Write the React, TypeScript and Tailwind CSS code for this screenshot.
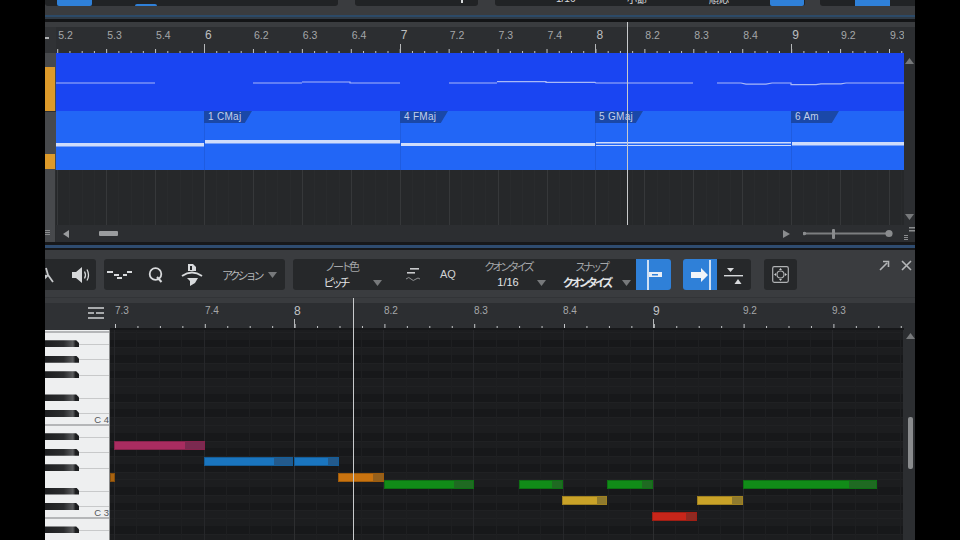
import React from 'react';

const JP = "font-['Noto_Sans_CJK_JP','Noto_Sans',sans-serif]";

const arrangeBeat = 48.93;
const arrangeStart = 204 - 45 - 11 - 3 * arrangeBeat; // x of 5.2 inside the lane

const arrangeLabels = ['5.2', '5.3', '5.4', '6', '6.2', '6.3', '6.4', '7', '7.2', '7.3', '7.4', '8', '8.2', '8.3', '8.4', '9', '9.2', '9.3'];

const pianoBeat = 89.8;
const pianoLabels = [
  { t: '7.3', x: 115 },
  { t: '7.4', x: 205 },
  { t: '8', x: 294 },
  { t: '8.2', x: 384 },
  { t: '8.3', x: 474 },
  { t: '8.4', x: 563 },
  { t: '9', x: 653 },
  { t: '9.2', x: 743 },
  { t: '9.3', x: 832 },
];

const chords = [
  { name: '1 CMaj', x: 204 },
  { name: '4 FMaj', x: 400 },
  { name: '5 GMaj', x: 595 },
  { name: '6 Am', x: 791 },
];

const notes = [
  { x: 114, end: 205, tail: 186, y: 441, c: 'bg-[#a92c60]', d: 'bg-[#7b2a50]' },
  { x: 204, end: 293, tail: 275, y: 457, c: 'bg-[#1a75bf]', d: 'bg-[#235a8c]' },
  { x: 294, end: 339, tail: 329, y: 457, c: 'bg-[#1a75bf]', d: 'bg-[#235a8c]' },
  { x: 110, end: 115, tail: 115, y: 473, c: 'bg-[#a8620f]', d: 'bg-[#a8620f]' },
  { x: 338, end: 384, tail: 374, y: 473, c: 'bg-[#c9730f]', d: 'bg-[#95601c]' },
  { x: 384, end: 474, tail: 455, y: 480, c: 'bg-[#118c18]', d: 'bg-[#1f6a22]' },
  { x: 519, end: 563, tail: 553, y: 480, c: 'bg-[#118c18]', d: 'bg-[#1f6a22]' },
  { x: 607, end: 653, tail: 643, y: 480, c: 'bg-[#118c18]', d: 'bg-[#1f6a22]' },
  { x: 743, end: 877, tail: 850, y: 480, c: 'bg-[#118c18]', d: 'bg-[#1f6a22]' },
  { x: 562, end: 607, tail: 598, y: 496, c: 'bg-[#c9a228]', d: 'bg-[#8f7a2e]' },
  { x: 697, end: 743, tail: 733, y: 496, c: 'bg-[#c9a228]', d: 'bg-[#8f7a2e]' },
  { x: 652, end: 697, tail: 687, y: 512, c: 'bg-[#c8261a]', d: 'bg-[#8f2a22]' },
];

const rowH = 7.76;
const rows = Array.from({ length: 30 }, (_, i) => {
  const n = i - 14;
  const s = ((-n - 1) % 12 + 12) % 12;
  return { n, y: 425 + n * rowH, black: [1, 3, 6, 8, 10].includes(s), c: s === 0 };
});

const Caret = ({ className = '' }: { className?: string }) => (
  <svg width="9" height="6" viewBox="0 0 9 6" className={className}>
    <path d="M0 0h9L4.5 6z" fill="#77797b" />
  </svg>
);

const Ruler = ({ count, step, start, height }: { count: number; step: number; start: number; height: number }) => (
  <svg className="absolute left-0 bottom-0 w-full" height={height}>
    {Array.from({ length: count }, (_, i) => {
      const x = start + i * step;
      const major = i % 4 === 0;
      return <rect key={i} x={x} y={height - (major ? 4 : 2)} width={1} height={major ? 4 : 2} fill="#c4c6c8" />;
    })}
  </svg>
);

function ArrangeView() {
  return (
    <div className="flex flex-col h-[203px] shrink-0">
      <div className="h-[5px] bg-[#3a3c3f]" />
      <div className="flex h-[26px] bg-[#2c2e31]">
        <div className="w-[11px] bg-[#303235] flex items-center pb-1">
          <div className="w-[4px] h-[2px] bg-[#b0b2b4]" />
        </div>
        <div className="relative flex-1 overflow-hidden font-['Liberation_Sans',sans-serif] text-[#a5a7a9]">
          {arrangeLabels.map((t, i) => (
            <span
              key={t}
              className={t.length === 1 ? 'absolute top-0 text-[12px] leading-4 text-[#bcbec0]' : 'absolute top-0 text-[10.5px] leading-4'}
              style={{ left: arrangeStart + i * arrangeBeat + 1 }}
            >
              {t}
            </span>
          ))}
          <Ruler count={72} step={arrangeBeat / 4} start={arrangeStart} height={10} />
          {[0, 1, 2, 3].map(i => (
            <div key={i} className="absolute bottom-0 w-[1px] h-[9px] bg-[#b5b7b9]" style={{ left: 148 + i * 195.7 }} />
          ))}
        </div>
        <div className="w-[11px] bg-[#2c2e31]" />
      </div>
      <div className="flex h-[117px]">
        <div className="w-[11px] flex flex-col bg-[#47494c]">
          <div className="h-[14px]" />
          <div className="h-[44px] bg-[#dd9a2a] mr-[1px]" />
          <div className="h-[43px] border-t border-[#2c2e31]" />
          <div className="h-[15px] bg-[#dd9a2a] mr-[1px]" />
        </div>
        <div className="relative flex-1 flex flex-col">
          <div className="h-[58px] bg-[#1a45f2]">
            <svg width="848" height="58" className="block">
              <g fill="none" stroke="#a9b8f7" strokeWidth="1.2">
                <path d="M0 30H99" />
                <path d="M197 30H246M246 29H294V30H344" />
                <path d="M393 30H441M441 28.6H490V29.4H539L540 30H637" />
                <path d="M661 30H685L690 31.2H710L716 30H735V31.6H760L765 30.8H785L790 30H848" />
              </g>
            </svg>
          </div>
          <div className="h-[59px] bg-[#2266f6] relative">
            <svg width="848" height="59" className="block">
              <g fill="#cfdcfb">
                <rect x="0" y="32" width="148" height="3.5" />
                <rect x="148" y="29" width="196" height="3.5" />
                <rect x="344" y="32" width="195" height="3" />
                <rect x="539" y="31" width="196" height="1.5" />
                <rect x="539" y="34" width="196" height="1" />
                <rect x="735" y="31" width="113" height="3.5" />
              </g>
              {[148, 344, 539, 735].map(x => (
                <rect key={x} x={x} y="0" width="1" height="59" fill="#1f5ce0" />
              ))}
            </svg>
            {chords.map(c => (
              <div
                key={c.name}
                className="absolute top-0 h-[12px] w-[48px] bg-[#1a48a8] text-[#c3d0ea] text-[10px] leading-[12px] pl-[4px] tracking-[0.3px] font-['Liberation_Sans',sans-serif] [clip-path:polygon(0_0,100%_0,85%_100%,0_100%)]"
                style={{ left: c.x - 56 }}
              >
                {c.name}
              </div>
            ))}
          </div>
        </div>
        <div className="w-[11px] bg-[#2c2e31] flex justify-center pt-[5px]">
          <svg width="9" height="6" viewBox="0 0 9 6">
            <path d="M4.5 0L9 6H0z" fill="#77797b" />
          </svg>
        </div>
      </div>
      <div className="flex h-[55px] bg-[#26282a]">
        <div className="w-[11px] bg-[#47494c] border-r border-[#2a2c2e]" />
        <div className="relative flex-1">
          {Array.from({ length: 70 }, (_, i) => (
            <div
              key={i}
              className={i % 4 === 0 ? 'absolute inset-y-0 w-[1px] bg-[#36383a]' : 'absolute inset-y-0 w-[1px] bg-[#292b2d]'}
              style={{ left: ((148 - 3 * arrangeBeat) + i * arrangeBeat / 4) }}
            />
          ))}
        </div>
        <div className="w-[11px] bg-[#2c2e31] flex flex-col items-center justify-end pb-[5px]">
          <svg width="9" height="6" viewBox="0 0 9 6">
            <path d="M0 0h9L4.5 6z" fill="#77797b" />
          </svg>
        </div>
      </div>
    </div>
  );
}

function ArrangeScrollbar() {
  return (
    <div className="flex items-center h-[17px] shrink-0 bg-[#2c2e31]">
      <div className="w-[11px] h-full bg-[#47494c] border-r border-[#2a2c2e] flex flex-col justify-center gap-[1px] pb-[2px]">
        <div className="h-[1px] w-[5px] bg-[#8b8d8f]" />
        <div className="h-[1px] w-[5px] bg-[#8b8d8f]" />
        <div className="h-[1px] w-[5px] bg-[#8b8d8f]" />
      </div>
      <svg width="6" height="8" viewBox="0 0 6 8" className="ml-[7px]">
        <path d="M6 0v8L0 4z" fill="#9a9c9e" />
      </svg>
      <div className="ml-[30px] w-[19px] h-[5px] rounded-[1px] bg-[#9a9c9e]" />
      <div className="flex-1" />
      <svg width="7" height="8" viewBox="0 0 7 8">
        <path d="M0 0v8l7-4z" fill="#8a8c8e" />
      </svg>
      <svg width="92" height="10" viewBox="0 0 92 10" className="ml-[13px]">
        <rect x="0" y="3.5" width="86" height="2" fill="#7c7e80" />
        <circle cx="1.5" cy="4.5" r="1.8" fill="#8a8c8e" />
        <rect x="29" y="0" width="3" height="10" rx="1" fill="#8a8c8e" />
        <circle cx="86" cy="4.5" r="3.6" fill="#8a8c8e" />
      </svg>
      <svg width="20" height="17" viewBox="0 0 20 17">
        <g fill="#8b8d8f">
          <rect x="9" y="10" width="4" height="1" />
          <rect x="9" y="12" width="4" height="1" />
          <rect x="9" y="14" width="4" height="1" />
          <rect x="14" y="2" width="6" height="1.5" />
          <rect x="14" y="5" width="6" height="1.5" />
        </g>
      </svg>
    </div>
  );
}

function Toolbar() {
  return (
    <div className="flex items-start h-[48px] shrink-0 bg-[#3a3c3f] pt-[9px] relative border-b border-[#323437]">
      <div className="flex items-center w-[51px] h-[31px] bg-[#26282a] rounded-r-[3px] overflow-hidden">
        <svg width="14" height="20" viewBox="0 0 14 20" className="-ml-[5px]">
          <path d="M6 3l2 7-3 3M8 10l5 7M6 10l-3 7" stroke="#c6c8ca" strokeWidth="1.8" fill="none" />
        </svg>
        <svg width="20" height="18" viewBox="0 0 20 18" className="ml-[17px]">
          <path d="M1 6h4l6-5v16l-6-5H1z" fill="#d5d7d9" />
          <path d="M13.5 5.5q2 3.5 0 7M16 3.5q3 5.5 0 11" stroke="#d5d7d9" strokeWidth="1.3" fill="none" />
        </svg>
      </div>
      <div className="flex items-center ml-[8px] w-[181px] h-[31px] bg-[#26282a] rounded-[3px]">
        <svg width="26" height="10" viewBox="0 0 26 10" className="ml-[3px]">
          <g fill="#d8dadc">
            <rect x="0" y="1" width="6" height="2" />
            <rect x="7" y="4" width="5" height="2" />
            <rect x="10" y="7" width="5" height="2" />
            <rect x="16" y="4" width="4" height="2" />
            <rect x="20" y="1" width="5" height="2" />
          </g>
        </svg>
        <svg width="16" height="17" viewBox="0 0 16 17" className="ml-[15px]">
          <circle cx="7.5" cy="8" r="5.8" stroke="#d8dadc" strokeWidth="1.8" fill="none" />
          <path d="M9 11l4.5 5" stroke="#d8dadc" strokeWidth="2" />
        </svg>
        <svg width="24" height="24" viewBox="0 0 24 24" className="ml-[16px]">
          <path d="M8 1h5l3 3v4H8z" fill="#d8dadc" />
          <rect x="10" y="3" width="2" height="4" fill="#26282a" />
          <path d="M2 13q10-7 20 0" stroke="#d8dadc" strokeWidth="1.8" fill="none" />
          <path d="M7 15h11l-3 5-5 3v-5z" fill="#d8dadc" />
        </svg>
        <span className={`ml-[18px] text-[11px] tracking-[-3px] whitespace-nowrap leading-4 text-[#b4b6b8] ${JP}`}>アクション</span>
        <Caret className="ml-[7px]" />
      </div>
      <div className="flex items-stretch ml-[8px] w-[343px] h-[31px] bg-[#26282a] rounded-l-[3px] relative">
        <div className={`ml-[16px] w-[64px] flex flex-col items-center whitespace-nowrap tracking-[-3px] text-[11px] ${JP}`}>
          <span className="leading-[15px] text-[#a5a7a9]">ノート色</span>
          <span className="leading-[16px] text-[#e2e4e6] -ml-[11px]">ピッチ</span>
        </div>
        <Caret className="absolute left-[80px] top-[21px]" />
        <svg width="16" height="18" viewBox="0 0 16 18" className="ml-[32px] self-center">
          <rect x="5" y="2" width="9" height="1.6" fill="#c8cacc" />
          <rect x="2" y="6" width="8" height="1.6" fill="#c8cacc" />
          <path d="M1 13q3-3 5 0t5 0q2-2 4 0" stroke="#8f9193" strokeWidth="1" fill="none" />
        </svg>
        <span className="ml-[19px] w-[15px] self-center text-[11px] text-[#d0d2d4] font-['Liberation_Sans',sans-serif]">AQ</span>
        <div className={`w-[70px] ml-[18px] flex flex-col items-center whitespace-nowrap ${JP}`}>
          <span className="text-[11px] tracking-[-3px] leading-[15px] text-[#a5a7a9]">クオンタイズ</span>
          <span className="text-[11px] leading-[16px] text-[#e2e4e6] font-['Liberation_Sans',sans-serif]">1/16</span>
        </div>
        <Caret className="absolute left-[244px] top-[21px]" />
        <div className={`ml-[13px] w-[70px] flex flex-col items-center whitespace-nowrap tracking-[-3px] text-[11px] ${JP}`}>
          <span className="leading-[15px] text-[#a5a7a9]">スナップ</span>
          <span className="leading-[16px] text-[#e2e4e6] font-bold -ml-[9px]">クオンタイズ</span>
        </div>
        <Caret className="absolute left-[329px] top-[21px]" />
      </div>
      <div className="w-[35px] h-[31px] bg-[#2f80d8] rounded-r-[3px] flex items-center justify-center">
        <svg width="20" height="30" viewBox="0 0 20 30">
          <rect x="3" y="0" width="2" height="30" fill="#cfe0f4" />
          <rect x="5" y="12" width="13" height="5" fill="#e8eef6" />
          <rect x="8" y="14" width="6" height="1.5" fill="#2f80d8" />
        </svg>
      </div>
      <div className="flex ml-[12px] h-[31px]">
        <div className="w-[34px] bg-[#2f80d8] rounded-l-[3px] flex items-center justify-center">
          <svg width="24" height="30" viewBox="0 0 24 30">
            <path d="M3 12h10V8l7 7-7 7v-4H3z" fill="#f2f5f9" />
            <rect x="21" y="0" width="2" height="30" fill="#cfe0f4" />
          </svg>
        </div>
        <div className="w-[34px] bg-[#26282a] rounded-r-[3px] flex items-center justify-center">
          <svg width="20" height="22" viewBox="0 0 20 22">
            <path d="M3 4h7l-3.5 4z" fill="#d8dadc" />
            <rect x="0" y="11" width="19" height="1.4" fill="#d8dadc" />
            <path d="M14 15l3.5 5h-7z" fill="#d8dadc" />
          </svg>
        </div>
      </div>
      <div className="w-[33px] h-[31px] ml-[13px] bg-[#26282a] rounded-[3px] flex items-center justify-center">
        <svg width="17" height="17" viewBox="0 0 17 17">
          <rect x="0.7" y="0.7" width="15.6" height="15.6" rx="1.5" stroke="#b0b2b4" strokeWidth="1.2" fill="none" />
          <circle cx="8.5" cy="8.5" r="3.5" stroke="#b0b2b4" strokeWidth="1.2" fill="none" />
          <path d="M8.5 2l1.5 2H7zM8.5 15L7 13h3zM2 8.5L4 7v3zM15 8.5L13 10V7z" fill="#c8cacc" />
        </svg>
      </div>
      <div className="flex-1" />
      <svg width="11" height="11" viewBox="0 0 11 11" className="mt-[1px]">
        <path d="M1 10l7-7M4 1.5h5.5V7" stroke="#b4b6b8" strokeWidth="1.6" fill="none" />
      </svg>
      <svg width="11" height="11" viewBox="0 0 11 11" className="ml-[11px] mr-[3px] mt-[1px]">
        <path d="M1 1l9 9M10 1l-9 9" stroke="#b4b6b8" strokeWidth="1.6" fill="none" />
      </svg>
    </div>
  );
}

function PianoRuler() {
  return (
    <div className="flex h-[32px] shrink-0 bg-[#2c2e31] border-t-[5px] border-[#393b3e]">
      <div className="w-[65px] bg-[#2f3134] flex justify-end items-start pt-[4px] pr-[5px]">
        <svg width="17" height="13" viewBox="0 0 17 13">
          <g fill="#a8aaac">
            <rect x="0" y="0" width="16" height="2" />
            <rect x="0" y="5" width="6" height="2" />
            <rect x="8" y="5" width="8" height="2" />
            <rect x="0" y="10" width="16" height="2" />
          </g>
        </svg>
      </div>
      <div className="relative flex-1 overflow-hidden font-['Liberation_Sans',sans-serif] text-[#a5a7a9] border-b-[2px] border-[#17181a]">
        {pianoLabels.map(l => (
          <span
            key={l.t}
            className={l.t.length === 1 ? 'absolute top-0 text-[12px] leading-4 text-[#c2c4c6]' : 'absolute top-0 text-[10px] leading-4'}
            style={{ left: l.x - 110 }}
          >
            {l.t}
          </span>
        ))}
        <Ruler count={36} step={pianoBeat / 4} start={5} height={5} />
        {pianoLabels.filter(l => l.t.length === 1).map(l => (
          <div key={l.t} className="absolute bottom-0 w-[1px] h-[9px] bg-[#b5b7b9]" style={{ left: l.x - 110 }} />
        ))}
      </div>
      <div className="w-[11px] bg-[#2c2e31]" />
    </div>
  );
}

function PianoRoll() {
  return (
    <div className="flex h-[210px] shrink-0 overflow-hidden">
      {/* keyboard, coordinates shared with the note grid */}
      <div className="relative w-[64px] bg-[#eeeff0] overflow-hidden">
        {rows.filter(r => r.c).map(r => (
          <div key={r.n} className="absolute left-0 right-0 h-[2px] bg-[#b5b6b8]" style={{ top: r.y + rowH - 331 }} />
        ))}
        {rows.filter(r => r.black).map(r => (
          <React.Fragment key={r.n}>
            <div className="absolute left-[34px] right-0 h-[1px] bg-[#c8c9ca]" style={{ top: r.y + rowH / 2 - 330 }} />
            <div
              className="absolute left-0 w-[34px] h-[7px] bg-[linear-gradient(90deg,#1e1f21_0%,#2b2c2e_55%,#5a5b5d_82%,#1c1d1f_90%)] [clip-path:polygon(0_0,92%_0,100%_40%,100%_100%,0_100%)]"
              style={{ top: r.y + 0.5 - 330 }}
            />
          </React.Fragment>
        ))}
        <span className="absolute right-0 top-[84px] text-[9.5px] leading-3 text-[#55565a] font-['Liberation_Sans',sans-serif]">C 4</span>
        <span className="absolute right-0 top-[177px] text-[9.5px] leading-3 text-[#55565a] font-['Liberation_Sans',sans-serif]">C 3</span>
      </div>
      <div className="w-[1px] bg-[#8a8b8c]" />
      <div className="relative flex-1 bg-[#1b1c1e] overflow-hidden">
        {rows.map(r => (
          <div
            key={r.n}
            className={r.black ? 'absolute inset-x-0 h-[8px] bg-[#17181a]' : 'absolute inset-x-0 h-[8px] bg-[#1c1d1f] border-t border-[#202123]'}
            style={{ top: r.y - 330 }}
          />
        ))}
        {Array.from({ length: 36 }, (_, i) => (
          <div
            key={i}
            className={(i + 8) % 16 === 0 ? 'absolute inset-y-0 w-[1px] bg-[#2d2e30]' : i % 4 === 0 ? 'absolute inset-y-0 w-[1px] bg-[#26272a]' : 'absolute inset-y-0 w-[1px] bg-[#1e1f21]'}
            style={{ left: 183.5 - 8 * pianoBeat / 4 + i * pianoBeat / 4 }}
          />
        ))}
        {notes.map(n => (
          <div
            key={n.x}
            className={`absolute h-[9px] flex border border-black/20 ${n.c}`}
            style={{ left: n.x - 110, top: n.y - 330, width: n.end - n.x }}
          >
            <div className={`absolute inset-y-0 right-0 ${n.d}`} style={{ width: n.end - n.tail }} />
          </div>
        ))}
      </div>
      <div className="w-[12px] bg-[#2c2e31] flex flex-col items-center pt-[3px] pl-[3px]">
        <svg width="9" height="6" viewBox="0 0 9 6">
          <path d="M4.5 0L9 6H0z" fill="#77797b" />
        </svg>
        <div className="mt-[78px] w-[5px] h-[52px] rounded-[2px] bg-[#8a8c8e]" />
      </div>
    </div>
  );
}

export default function App() {
  return (
    <div className="relative w-[960px] h-[540px] bg-black overflow-hidden">
      <div className="w-[870px] h-full ml-[45px] flex flex-col bg-[#3a3c3f] overflow-hidden">
        {/* clipped main toolbar at the very top */}
        <div className="flex h-[6px] shrink-0 overflow-hidden text-[10px] text-[#d8dadc]">
          <div className="w-[293px] bg-[#212325] rounded-b-[3px] relative">
            <div className="absolute left-[12px] top-0 w-[35px] h-[6px] bg-[#2f80d8] rounded-b-[2px]" />
            <div className="absolute left-[90px] top-[4px] w-[22px] h-[2px] bg-[#2f80d8] rounded-t-[2px]" />
          </div>
          <div className="ml-[17px] w-[123px] bg-[#212325] rounded-b-[3px] relative">
            <div className="absolute right-[15px] top-0 w-[2px] h-[3px] bg-[#d8dadc]" />
          </div>
          <div className={`ml-[17px] w-[310px] bg-[#212325] rounded-b-[3px] relative flex ${JP}`}>
            <span className="absolute left-[61px] -top-[9px] font-['Liberation_Sans',sans-serif]">1/16</span>
            <span className="absolute left-[132px] -top-[9px]">小節</span>
            <span className="absolute left-[214px] -top-[9px]">順応</span>
            <div className="absolute right-[1px] top-0 w-[34px] h-[6px] bg-[#2f80d8] rounded-b-[2px]" />
          </div>
          <div className="ml-[15px] flex-1 bg-[#212325] rounded-bl-[3px] relative">
            <div className="absolute left-[35px] top-0 w-[35px] h-[6px] bg-[#2f80d8]" />
          </div>
        </div>
        <div className="h-[9px] shrink-0" />
        <div className="h-[2px] shrink-0 bg-[#2c4a68]" />
        <div className="h-[2px] shrink-0 bg-[#303a44]" />
        <div className="h-[3px] shrink-0 bg-[#131416]" />
        <ArrangeView />
        <ArrangeScrollbar />
        <div className="h-[3px] shrink-0 bg-[#17181a]" />
        <div className="h-[3px] shrink-0 bg-[#2f4c70]" />
        <div className="h-[2px] shrink-0 bg-[#17181a]" />
        <Toolbar />
        <PianoRuler />
        <PianoRoll />
      </div>
      {/* playheads */}
      <div className="absolute left-[627px] top-[22px] w-[1px] h-[203px] bg-[#c8cacc]" />
      <div className="absolute left-[353px] top-[298px] w-[1px] h-[242px] bg-[#c8cacc]" />
    </div>
  );
}
